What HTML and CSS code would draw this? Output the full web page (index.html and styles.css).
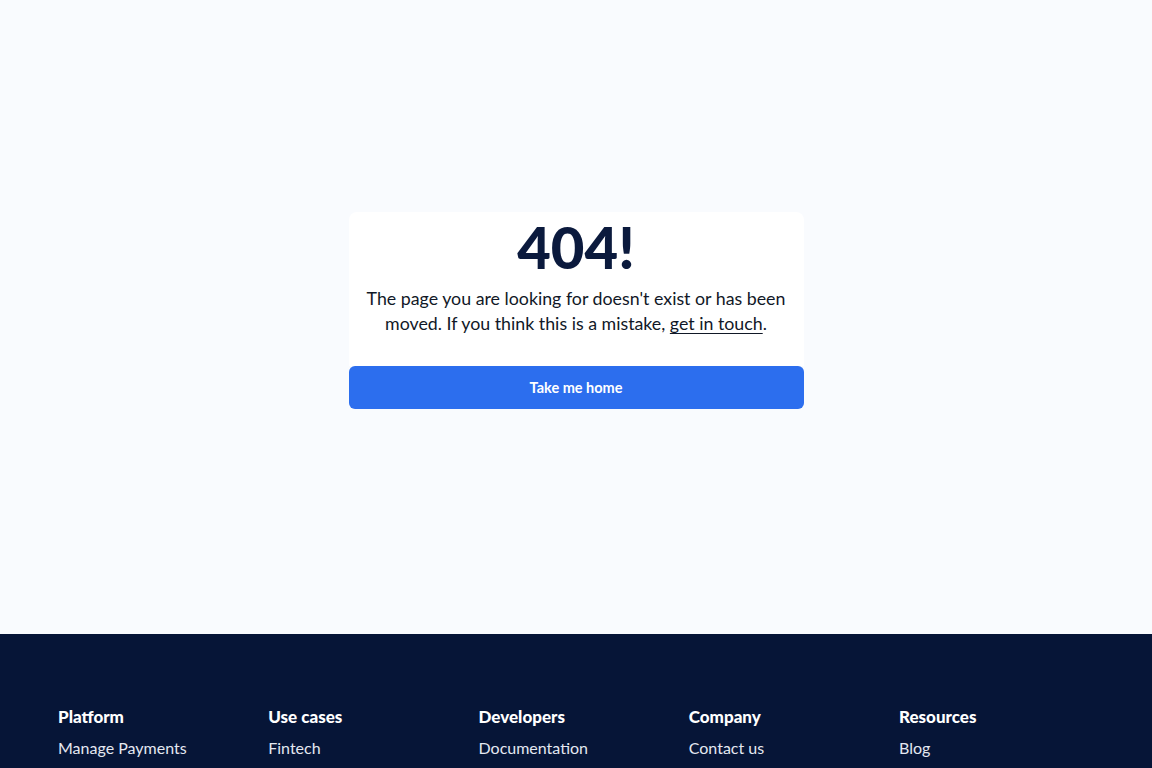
FILE: index.html
```html
<!DOCTYPE html>
<html lang="en">
<head>
<meta charset="utf-8">
<title>404</title>
<link rel="stylesheet" href="styles.css">
</head>
<body>
<main class="main">
  <div class="notfound">
    <div class="card">
      <h1 class="code">404!</h1>
      <p class="msg">The page you are looking for doesn't exist or has been moved. If you think this is a mistake, <a href="#" class="link">get in touch</a>.</p>
    </div>
    <a href="#" class="btn">Take me home</a>
  </div>
</main>
<footer class="footer">
  <div class="cols">
    <div class="col"><h3 class="col-title">Platform</h3><a class="col-link" href="#">Manage Payments</a></div>
    <div class="col"><h3 class="col-title">Use cases</h3><a class="col-link" href="#">Fintech</a></div>
    <div class="col"><h3 class="col-title">Developers</h3><a class="col-link" href="#">Documentation</a></div>
    <div class="col"><h3 class="col-title">Company</h3><a class="col-link" href="#">Contact us</a></div>
    <div class="col"><h3 class="col-title">Resources</h3><a class="col-link" href="#">Blog</a></div>
  </div>
</footer>
</body>
</html>
```

FILE: styles.css
```css
* { box-sizing: border-box; }
html, body { margin: 0; padding: 0; }
body {
  font-family: "Lato", "Inter", sans-serif;
  background: #f9fbfe;
  color: #0b1a3d;
  overflow: hidden;
  height: 768px;
}
.main {
  height: 634px;
  display: flex;
  align-items: flex-start;
  justify-content: center;
  padding-top: 212px;
}
.notfound {
  width: 455px;
  display: flex;
  flex-direction: column;
}
.card {
  background: #ffffff;
  border-radius: 8px 8px 0 0;
  padding: 5px 4px 30px;
  text-align: center;
}
.code {
  margin: 0;
  font-size: 58px;
  font-weight: 900;
  line-height: 60px;
  letter-spacing: 0;
  color: #0b1a3d;
}
.msg {
  margin: 9px 0 0;
  font-size: 17.8px;
  line-height: 25px;
  color: #111827;
}
.link { color: inherit; text-decoration: underline; text-underline-offset: 3px; text-decoration-thickness: 1px; }
.btn {
  display: flex;
  align-items: center;
  justify-content: center;
  height: 43px;
  background: #2c6eee;
  color: #ffffff;
  border-radius: 6px;
  font-size: 14.5px;
  font-weight: 700;
  text-decoration: none;
}
.footer {
  height: 134px;
  background: #061537;
  padding: 72px 0 0 58px;
}
.cols {
  display: grid;
  grid-template-columns: repeat(5, 210.25px);
}
.col { display: flex; flex-direction: column; }
.col-title {
  margin: 0;
  font-size: 17px;
  font-weight: 900;
  color: #ffffff;
  line-height: 22px;
}
.col-link {
  margin-top: 9px;
  font-size: 16px;
  line-height: 22px;
  color: #e4e8f1;
  text-decoration: none;
}
```
